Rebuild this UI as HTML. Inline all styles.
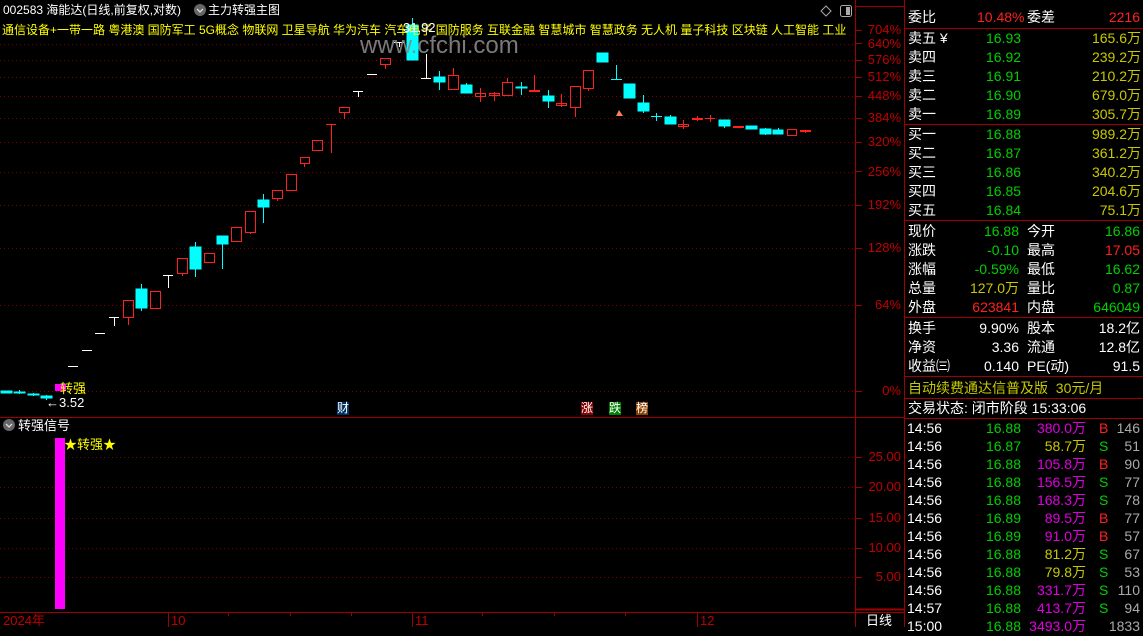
<!DOCTYPE html>
<html><head><meta charset="utf-8"><style>
*{margin:0;padding:0}
body{width:1143px;height:627px;background:#000;overflow:hidden;position:relative;font-family:"Liberation Sans","Noto Sans CJK SC",sans-serif;font-size:13px;color:#fff}
.a{position:absolute;white-space:nowrap;line-height:15px}
.p{position:absolute;left:905px;width:238px}
.r{position:absolute;height:19px;line-height:19px;font-size:14px;width:238px}
.r span{position:absolute}
.g{color:#00d000}.rd{color:#ff2020}.y{color:#c8c800}.m{color:#e000e0}.w{color:#fff}.gr{color:#aaa}
</style></head><body>
<svg width="1143" height="627" style="position:absolute;left:0;top:0">
<g stroke="#800000" stroke-width="1" stroke-dasharray="1,3">
<line x1="0" y1="44.5" x2="855" y2="44.5"/><line x1="0" y1="60.5" x2="855" y2="60.5"/><line x1="0" y1="77.5" x2="855" y2="77.5"/><line x1="0" y1="96.5" x2="855" y2="96.5"/><line x1="0" y1="118.5" x2="855" y2="118.5"/><line x1="0" y1="142.5" x2="855" y2="142.5"/><line x1="0" y1="172.5" x2="855" y2="172.5"/><line x1="0" y1="205.5" x2="855" y2="205.5"/><line x1="0" y1="248.5" x2="855" y2="248.5"/><line x1="0" y1="305.5" x2="855" y2="305.5"/><line x1="0" y1="391.5" x2="855" y2="391.5"/>
<line x1="0" y1="457.5" x2="855" y2="457.5"/><line x1="0" y1="487.5" x2="855" y2="487.5"/><line x1="0" y1="518.5" x2="855" y2="518.5"/><line x1="0" y1="548.5" x2="855" y2="548.5"/><line x1="0" y1="577.5" x2="855" y2="577.5"/>
</g>
<g stroke="#a00000" stroke-width="1">
<line x1="855.5" y1="0" x2="855.5" y2="627"/><line x1="904.5" y1="0" x2="904.5" y2="627"/>
<line x1="0" y1="417.5" x2="904" y2="417.5"/><line x1="0" y1="612.5" x2="904" y2="612.5"/>
<line x1="168.5" y1="612" x2="168.5" y2="627"/><line x1="412.5" y1="612" x2="412.5" y2="627"/><line x1="697.5" y1="612" x2="697.5" y2="627"/>
<line x1="228.5" y1="612" x2="228.5" y2="616"/><line x1="290.5" y1="612" x2="290.5" y2="616"/><line x1="351.5" y1="612" x2="351.5" y2="616"/><line x1="482.5" y1="612" x2="482.5" y2="616"/><line x1="554.5" y1="612" x2="554.5" y2="616"/><line x1="625.5" y1="612" x2="625.5" y2="616"/>
<line x1="855" y1="6.5" x2="904" y2="6.5"/>
<line x1="855" y1="609.5" x2="904" y2="609.5" stroke-width="2"/>
<g>
<line x1="856" y1="30.5" x2="862" y2="30.5"/><line x1="856" y1="43.5" x2="862" y2="43.5"/><line x1="856" y1="60.5" x2="862" y2="60.5"/><line x1="856" y1="77.5" x2="862" y2="77.5"/><line x1="856" y1="96.5" x2="862" y2="96.5"/><line x1="856" y1="118.5" x2="862" y2="118.5"/><line x1="856" y1="142.5" x2="862" y2="142.5"/><line x1="856" y1="171.5" x2="862" y2="171.5"/><line x1="856" y1="205.5" x2="862" y2="205.5"/><line x1="856" y1="248.5" x2="862" y2="248.5"/><line x1="856" y1="305.5" x2="862" y2="305.5"/><line x1="856" y1="391.5" x2="862" y2="391.5"/>
<line x1="856" y1="457.5" x2="862" y2="457.5"/><line x1="856" y1="487.5" x2="862" y2="487.5"/><line x1="856" y1="518.5" x2="862" y2="518.5"/><line x1="856" y1="548.5" x2="862" y2="548.5"/><line x1="856" y1="577.5" x2="862" y2="577.5"/>
</g>
<line x1="905" y1="28.5" x2="1143" y2="28.5"/><line x1="905" y1="124.5" x2="1143" y2="124.5"/><line x1="905" y1="220.5" x2="1143" y2="220.5"/><line x1="905" y1="317.5" x2="1143" y2="317.5"/><line x1="905" y1="376.5" x2="1143" y2="376.5"/><line x1="905" y1="398.5" x2="1143" y2="398.5"/><line x1="905" y1="418.5" x2="1143" y2="418.5"/>
</g>
<g stroke-width="1">
<g fill="#00ffff" stroke="#00ffff">
<rect x="1" y="391" width="11" height="2"/><line x1="19.5" y1="390" x2="19.5" y2="394"/><rect x="14" y="392" width="11" height="1"/>
<rect x="28" y="394" width="11" height="1"/><line x1="33.5" y1="393" x2="33.5" y2="396"/>
<rect x="41" y="396" width="11" height="2"/><line x1="46.5" y1="395" x2="46.5" y2="400"/>
</g>
<g stroke="#fff" fill="#fff">
<line x1="68" y1="366.5" x2="78" y2="366.5"/><line x1="82" y1="350.5" x2="92" y2="350.5"/><line x1="95" y1="333.5" x2="105" y2="333.5"/>
<line x1="109" y1="317.5" x2="119" y2="317.5"/><line x1="114.5" y1="317" x2="114.5" y2="326"/>
<line x1="163" y1="275.5" x2="173" y2="275.5"/><line x1="168.5" y1="275" x2="168.5" y2="288"/>
</g>
<g fill="none" stroke="#ff2020">
<rect x="123.5" y="300.5" width="10" height="17"/><line x1="128.5" y1="318" x2="128.5" y2="325"/>
<rect x="150.5" y="291.5" width="10" height="17"/>
<rect x="177.5" y="258.5" width="10" height="15"/><line x1="182.5" y1="274" x2="182.5" y2="276"/>
<rect x="204.5" y="253.5" width="10" height="9"/>
<rect x="231.5" y="227.5" width="10" height="14"/>
<rect x="245.5" y="211.5" width="10" height="21"/><line x1="250.5" y1="233" x2="250.5" y2="234"/>
<rect x="272.5" y="190.5" width="10" height="8"/><line x1="277.5" y1="199" x2="277.5" y2="201"/>
<rect x="286.5" y="174.5" width="10" height="16"/>
<rect x="300.5" y="157.5" width="9" height="6"/><line x1="304.5" y1="164" x2="304.5" y2="167"/>
<rect x="312.5" y="140.5" width="10" height="10"/>
<line x1="326" y1="124.5" x2="336" y2="124.5"/><line x1="331.5" y1="124" x2="331.5" y2="153"/>
<rect x="339.5" y="107.5" width="10" height="5"/><line x1="344.5" y1="113" x2="344.5" y2="119"/>
<rect x="380.5" y="58.5" width="10" height="6"/><line x1="385.5" y1="65" x2="385.5" y2="69"/>
<rect x="448.5" y="75.5" width="10" height="14"/><line x1="453.5" y1="68" x2="453.5" y2="75"/>
<rect x="475.5" y="93.5" width="10" height="3"/><line x1="480.5" y1="88" x2="480.5" y2="102"/>
<rect x="489.5" y="93.5" width="10" height="2"/><line x1="494.5" y1="92" x2="494.5" y2="101"/>
<rect x="502.5" y="82.5" width="10" height="13"/><line x1="507.5" y1="78" x2="507.5" y2="82"/>
<rect x="529.5" y="90.5" width="10" height="1"/><line x1="534.5" y1="75" x2="534.5" y2="91"/>
<rect x="556.5" y="103.5" width="10" height="2"/><line x1="561.5" y1="94" x2="561.5" y2="107"/>
<rect x="570.5" y="86.5" width="10" height="21"/><line x1="575.5" y1="108" x2="575.5" y2="117"/>
<rect x="583.5" y="70.5" width="10" height="18"/><line x1="588.5" y1="89" x2="588.5" y2="91"/>
<rect x="678.5" y="124.5" width="10" height="2"/><line x1="683.5" y1="120" x2="683.5" y2="129"/>
<rect x="692.5" y="118.5" width="10" height="1"/><line x1="697.5" y1="116" x2="697.5" y2="121"/>
<line x1="705" y1="118.5" x2="715" y2="118.5"/><line x1="710.5" y1="115" x2="710.5" y2="122"/>
<rect x="733.5" y="126.5" width="10" height="1"/>
<rect x="787.5" y="129.5" width="9" height="6"/>
<rect x="800.5" y="130.5" width="10" height="1"/><line x1="805.5" y1="131" x2="805.5" y2="133"/>
</g>
<g stroke="#fff">
<line x1="358.5" y1="91" x2="358.5" y2="97"/><line x1="353" y1="91.5" x2="363" y2="91.5"/>
<line x1="367" y1="74.5" x2="377" y2="74.5"/>
<line x1="399.5" y1="42" x2="399.5" y2="47"/><line x1="394" y1="42.5" x2="404" y2="42.5"/>
<line x1="426.5" y1="54" x2="426.5" y2="78"/><line x1="421" y1="78.5" x2="431" y2="78.5"/>
</g>
<g fill="#00ffff" stroke="#00ffff">
<rect x="136" y="289" width="11" height="19"/><line x1="141.5" y1="284" x2="141.5" y2="311"/>
<rect x="190" y="247" width="11" height="22"/><line x1="195.5" y1="242" x2="195.5" y2="277"/>
<rect x="217" y="236" width="11" height="8"/><line x1="222.5" y1="244" x2="222.5" y2="269"/>
<rect x="258" y="200" width="11" height="7"/><line x1="263.5" y1="194" x2="263.5" y2="223"/>
<rect x="407" y="25" width="11" height="35"/><line x1="412.5" y1="18" x2="412.5" y2="25"/>
<rect x="434" y="77" width="11" height="5"/><line x1="439.5" y1="71" x2="439.5" y2="90"/>
<rect x="461" y="85" width="11" height="8"/><line x1="466.5" y1="83" x2="466.5" y2="85"/>
<rect x="516" y="87" width="11" height="1"/><line x1="521.5" y1="82" x2="521.5" y2="95"/>
<rect x="543" y="96" width="11" height="5"/><line x1="548.5" y1="90" x2="548.5" y2="108"/>
<rect x="597" y="53" width="11" height="9"/>
<line x1="611" y1="79.5" x2="622" y2="79.5"/><line x1="616.5" y1="65" x2="616.5" y2="79"/>
<rect x="624" y="84" width="11" height="14"/>
<rect x="638" y="103" width="11" height="8"/><line x1="643.5" y1="95" x2="643.5" y2="113"/>
<line x1="651" y1="116.5" x2="662" y2="116.5"/><line x1="656.5" y1="113" x2="656.5" y2="121"/>
<rect x="665" y="117" width="11" height="7"/><line x1="670.5" y1="115" x2="670.5" y2="117"/>
<rect x="719" y="120" width="11" height="6"/><line x1="724.5" y1="126" x2="724.5" y2="128"/>
<rect x="746" y="126" width="11" height="3"/>
<rect x="760" y="129" width="11" height="5"/><line x1="765.5" y1="128" x2="765.5" y2="135"/>
<rect x="773" y="130" width="10" height="4"/><line x1="778.5" y1="128" x2="778.5" y2="130"/>
</g>
<polygon points="619,110 616,116 623,116" fill="#ff8050"/>
<rect x="55" y="384" width="11" height="7" fill="#ff00ff"/>
<rect x="55" y="438" width="10" height="171" fill="#ff00ff"/>
</g>
<circle cx="200" cy="10" r="6" fill="#666"/><polyline points="197,9 200,12 203,9" fill="none" stroke="#ddd" stroke-width="1.3"/>
<circle cx="9" cy="425" r="6" fill="#666"/><polyline points="6,424 9,427 12,424" fill="none" stroke="#ddd" stroke-width="1.3"/>
<polygon points="826,6 831,11 826,16 821,11" fill="none" stroke="#aaa"/>
<rect x="840.5" y="5.5" width="11" height="11" rx="2" fill="none" stroke="#aaa"/><rect x="846" y="7" width="4" height="8" fill="#aaa"/>
</svg>

<div class="a" style="left:3px;top:3px;font-size:12px">002583 海能达(日线,前复权,对数)</div>
<div class="a" style="left:208px;top:3px;font-size:12px">主力转强主图</div>
<div class="a" style="left:2px;top:23px;color:#ffff00;width:852px;overflow:hidden;font-size:12px">通信设备+一带一路 粤港澳 国防军工 5G概念 物联网 卫星导航 华为汽车 汽车电子 国防服务 互联金融 智慧城市 智慧政务 无人机 量子科技 区块链 人工智能 工业</div>
<div class="a" style="left:403px;top:20px;color:#fff">31.92</div>
<div class="a" style="left:360px;top:33px;color:#888;font-size:24px;line-height:26px;opacity:.9">www.cfchi.com</div>
<div class="a" style="left:60px;top:381px;color:#ffff00">转强</div>
<div class="a" style="left:46px;top:395px;color:#fff">←3.52</div>
<div class="a" style="left:337px;top:402px;background:#003060;color:#fff;font-size:12px;line-height:13px">财</div>
<div class="a" style="left:581px;top:402px;background:#8b0000;color:#fff;font-size:12px;line-height:13px">涨</div>
<div class="a" style="left:609px;top:402px;background:#008000;color:#fff;font-size:12px;line-height:13px">跌</div>
<div class="a" style="left:636px;top:402px;background:#8b4000;color:#fff;font-size:12px;line-height:13px">榜</div>
<div class="a" style="left:18px;top:418px">转强信号</div>
<div class="a" style="left:64px;top:437px;color:#ffff00">★转强★</div>
<div class="a" style="left:3px;top:613px;color:#c00000">2024年</div>
<div class="a" style="left:171px;top:613px;color:#c00000">10</div>
<div class="a" style="left:415px;top:613px;color:#c00000">11</div>
<div class="a" style="left:700px;top:613px;color:#c00000">12</div>
<div class="a" style="left:866px;top:613px;color:#fff">日线</div>
<div style="position:absolute;left:856px;top:0;width:45px;text-align:right;color:#c00000;font-size:13px">
<div class="a" style="right:0;top:22px">704%</div><div class="a" style="right:0;top:36px">640%</div><div class="a" style="right:0;top:52px">576%</div><div class="a" style="right:0;top:69px">512%</div><div class="a" style="right:0;top:88px">448%</div><div class="a" style="right:0;top:110px">384%</div><div class="a" style="right:0;top:134px">320%</div><div class="a" style="right:0;top:164px">256%</div><div class="a" style="right:0;top:197px">192%</div><div class="a" style="right:0;top:240px">128%</div><div class="a" style="right:0;top:297px">64%</div><div class="a" style="right:0;top:383px">0%</div>
<div class="a" style="right:0;top:449px">25.00</div><div class="a" style="right:0;top:479px">20.00</div><div class="a" style="right:0;top:510px">15.00</div><div class="a" style="right:0;top:540px">10.00</div><div class="a" style="right:0;top:569px">5.00</div>
</div>

<div class="p" style="top:0">
<div class="r" style="top:8px"><span style="left:3px">委比</span><span class="rd" style="left:72px">10.48%</span><span style="left:122px">委差</span><span class="rd" style="right:3px">2216</span></div>
<div class="r" style="top:29px"><span style="left:3px">卖五 ¥</span><span class="g" style="left:81px">16.93</span><span class="y" style="right:2px">165.6万</span></div>
<div class="r" style="top:48px"><span style="left:3px">卖四</span><span class="g" style="left:81px">16.92</span><span class="y" style="right:2px">239.2万</span></div>
<div class="r" style="top:67px"><span style="left:3px">卖三</span><span class="g" style="left:81px">16.91</span><span class="y" style="right:2px">210.2万</span></div>
<div class="r" style="top:86px"><span style="left:3px">卖二</span><span class="g" style="left:81px">16.90</span><span class="y" style="right:2px">679.0万</span></div>
<div class="r" style="top:105px"><span style="left:3px">卖一</span><span class="g" style="left:81px">16.89</span><span class="y" style="right:2px">305.7万</span></div>
<div class="r" style="top:125px"><span style="left:3px">买一</span><span class="g" style="left:81px">16.88</span><span class="y" style="right:2px">989.2万</span></div>
<div class="r" style="top:144px"><span style="left:3px">买二</span><span class="g" style="left:81px">16.87</span><span class="y" style="right:2px">361.2万</span></div>
<div class="r" style="top:163px"><span style="left:3px">买三</span><span class="g" style="left:81px">16.86</span><span class="y" style="right:2px">340.2万</span></div>
<div class="r" style="top:182px"><span style="left:3px">买四</span><span class="g" style="left:81px">16.85</span><span class="y" style="right:2px">204.6万</span></div>
<div class="r" style="top:201px"><span style="left:3px">买五</span><span class="g" style="left:81px">16.84</span><span class="y" style="right:2px">75.1万</span></div>
<div class="r" style="top:222px"><span style="left:3px">现价</span><span class="g" style="right:124px">16.88</span><span style="left:122px">今开</span><span class="g" style="right:3px">16.86</span></div>
<div class="r" style="top:241px"><span style="left:3px">涨跌</span><span class="g" style="right:124px">-0.10</span><span style="left:122px">最高</span><span class="rd" style="right:3px">17.05</span></div>
<div class="r" style="top:260px"><span style="left:3px">涨幅</span><span class="g" style="right:124px">-0.59%</span><span style="left:122px">最低</span><span class="g" style="right:3px">16.62</span></div>
<div class="r" style="top:279px"><span style="left:3px">总量</span><span class="y" style="right:124px">127.0万</span><span style="left:122px">量比</span><span class="g" style="right:3px">0.87</span></div>
<div class="r" style="top:298px"><span style="left:3px">外盘</span><span class="rd" style="right:124px">623841</span><span style="left:122px">内盘</span><span class="g" style="right:3px">646049</span></div>
<div class="r" style="top:319px"><span style="left:3px">换手</span><span style="right:124px">9.90%</span><span style="left:122px">股本</span><span style="right:3px">18.2亿</span></div>
<div class="r" style="top:338px"><span style="left:3px">净资</span><span style="right:124px">3.36</span><span style="left:122px">流通</span><span style="right:3px">12.8亿</span></div>
<div class="r" style="top:357px"><span style="left:3px">收益㈢</span><span style="right:124px">0.140</span><span style="left:122px">PE(动)</span><span style="right:3px">91.5</span></div>
<div class="r" style="top:379px"><span class="y" style="left:3px">自动续费通达信普及版&nbsp; 30元/月</span></div>
<div class="r" style="top:399px"><span style="left:3px">交易状态: 闭市阶段 15:33:06</span></div>
</div>
<div class="p" style="top:419px;font-size:14px">
<div class="r" style="top:0"><span style="left:2px">14:56</span><span class="g" style="right:122px">16.88</span><span class="m" style="right:57px">380.0万</span><span class="rd" style="left:194px">B</span><span class="gr" style="right:3px">146</span></div>
<div class="r" style="top:18px"><span style="left:2px">14:56</span><span class="g" style="right:122px">16.87</span><span class="y" style="right:57px">58.7万</span><span class="g" style="left:194px">S</span><span class="gr" style="right:3px">51</span></div>
<div class="r" style="top:36px"><span style="left:2px">14:56</span><span class="g" style="right:122px">16.88</span><span class="m" style="right:57px">105.8万</span><span class="rd" style="left:194px">B</span><span class="gr" style="right:3px">90</span></div>
<div class="r" style="top:54px"><span style="left:2px">14:56</span><span class="g" style="right:122px">16.88</span><span class="m" style="right:57px">156.5万</span><span class="g" style="left:194px">S</span><span class="gr" style="right:3px">77</span></div>
<div class="r" style="top:72px"><span style="left:2px">14:56</span><span class="g" style="right:122px">16.88</span><span class="m" style="right:57px">168.3万</span><span class="g" style="left:194px">S</span><span class="gr" style="right:3px">78</span></div>
<div class="r" style="top:90px"><span style="left:2px">14:56</span><span class="g" style="right:122px">16.89</span><span class="m" style="right:57px">89.5万</span><span class="rd" style="left:194px">B</span><span class="gr" style="right:3px">77</span></div>
<div class="r" style="top:108px"><span style="left:2px">14:56</span><span class="g" style="right:122px">16.89</span><span class="m" style="right:57px">91.0万</span><span class="rd" style="left:194px">B</span><span class="gr" style="right:3px">57</span></div>
<div class="r" style="top:126px"><span style="left:2px">14:56</span><span class="g" style="right:122px">16.88</span><span class="y" style="right:57px">81.2万</span><span class="g" style="left:194px">S</span><span class="gr" style="right:3px">67</span></div>
<div class="r" style="top:144px"><span style="left:2px">14:56</span><span class="g" style="right:122px">16.88</span><span class="y" style="right:57px">79.8万</span><span class="g" style="left:194px">S</span><span class="gr" style="right:3px">53</span></div>
<div class="r" style="top:162px"><span style="left:2px">14:56</span><span class="g" style="right:122px">16.88</span><span class="m" style="right:57px">331.7万</span><span class="g" style="left:194px">S</span><span class="gr" style="right:3px">110</span></div>
<div class="r" style="top:180px"><span style="left:2px">14:57</span><span class="g" style="right:122px">16.88</span><span class="m" style="right:57px">413.7万</span><span class="g" style="left:194px">S</span><span class="gr" style="right:3px">94</span></div>
<div class="r" style="top:198px"><span style="left:2px">15:00</span><span class="g" style="right:122px">16.88</span><span class="m" style="right:57px">3493.0万</span><span class="gr" style="right:3px">1833</span></div>
</div>
</body></html>
